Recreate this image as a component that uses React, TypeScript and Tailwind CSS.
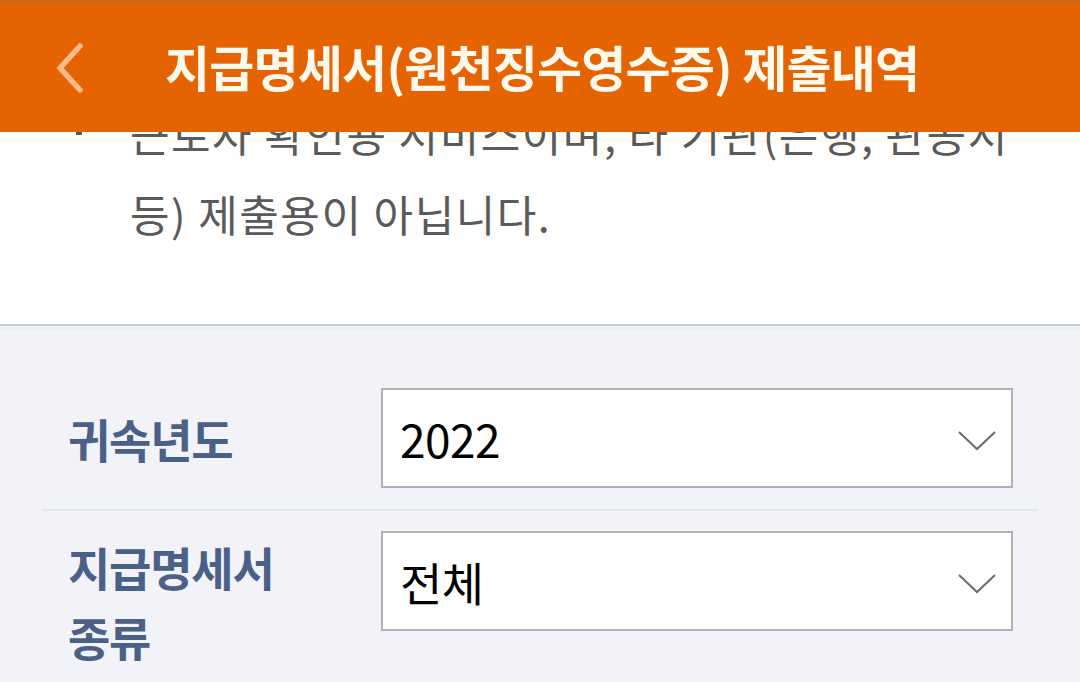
import React from "react";

const FONT = { fontFamily: '"Noto Sans CJK KR", "Noto Sans", sans-serif' };

function Chevron() {
  return (
    <svg width="40" height="22" viewBox="0 0 40 22" className="mt-[6px] shrink-0">
      <path d="M2 2 L20 19 L38 2" fill="none" stroke="#6b6b6b" strokeWidth="2" />
    </svg>
  );
}

function Select({ value }: { value: string }) {
  return (
    <div className="flex h-[100px] w-[632px] items-center justify-between border-2 border-[#b1b1b1] bg-white pl-[17px] pr-[14px]">
      <span className="text-[46px] font-normal leading-none text-black tracking-[-0.5px]">{value}</span>
      <Chevron />
    </div>
  );
}

export default function App() {
  return (
    <div className="relative h-[682px] w-full overflow-hidden bg-[#f1f3f8]" style={FONT}>
      {/* header overlay */}
      <div className="absolute left-0 right-0 top-0 z-10 flex h-[132px] items-center border-t-[3px] border-[#c9631f] bg-[#e56300]">
        <svg width="40" height="56" viewBox="0 0 40 56" className="ml-[50px]">
          <path d="M30 6 L10 28 L30 50" fill="none" stroke="#fdb98a" strokeWidth="5.5" strokeLinecap="round" />
        </svg>
        <h1 className="ml-[75px] mt-[-4px] text-[49px] font-bold leading-none tracking-[-0.8px] text-[#fff8ec]">
          지급명세서(원천징수영수증) 제출내역
        </h1>
      </div>

      {/* notice */}
      <div className="bg-white pb-[71px] pl-[130px] pr-[20px] pt-[93px]">
        <div className="relative whitespace-nowrap text-[43px] leading-[80px] text-[#5a5a5a] tracking-[1.5px]">
          <span className="absolute left-[-54px] top-[34px] h-[8px] w-[6px] bg-[#5a5a5a]" />
          <p>근로자 확인용 서비스이며, 타 기관(은행, 관공서</p>
          <p>등) 제출용이 아닙니다.</p>
        </div>
      </div>

      {/* form */}
      <div className="border-t-2 border-[#c6cad2] bg-[#f1f3f8]">
        <div className="h-[4px] bg-[#eaeff8]" />
        <div className="mx-[42px]">
          <div className="flex items-center pb-[21px] pl-[26px] pt-[58px]">
            <div className="w-[313px] text-[46px] font-bold leading-[70px] tracking-[-1.2px] text-[#4a6086]">귀속년도</div>
            <Select value="2022" />
          </div>
          <div className="h-[2px] bg-[#e2e5eb]" />
          <div className="flex items-start pl-[26px] pt-[20px]">
            <div className="w-[313px] text-[46px] font-bold leading-[70px] tracking-[-1.2px] text-[#4a6086]">
              <div>지급명세서</div>
              <div>종류</div>
            </div>
            <Select value="전체" />
          </div>
        </div>
      </div>
    </div>
  );
}
